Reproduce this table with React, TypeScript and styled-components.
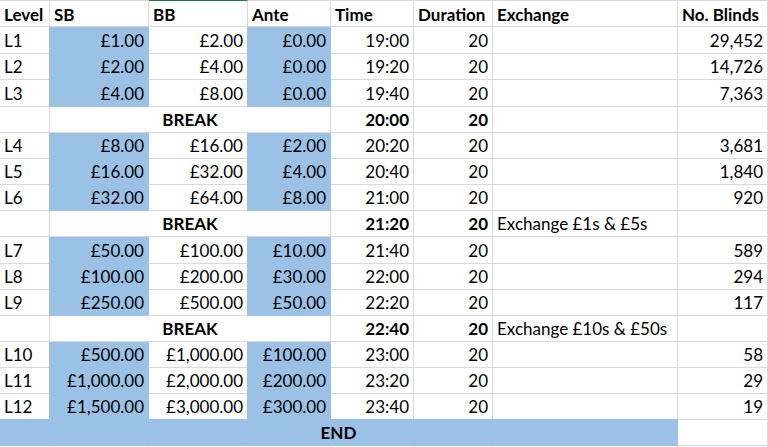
import React from "react";
import styled, { createGlobalStyle, css } from "styled-components";

const GRID = "#d9d9d9";
const BLUE = "#9bc2e6";
const GREEN = "#217346";

const Global = createGlobalStyle`
  html, body { margin: 0; padding: 0; background: #fff; overflow: hidden; }
  body { font-family: Lato, "Open Sans", sans-serif; color: #000; }
`;

const Sheet = styled.div`
  display: grid;
  grid-template-columns: 50px 99px 99px 83px 83px 79px 185px 90px;
  grid-template-rows: 27px 27px 26px 27px 26px 26px 26px 26px 26px 27px 26px 26px 26px 26px 26px 26px 26px 26px;
  width: 768px;
  height: 447px;
  overflow: hidden;
  font-size: 17px;
  line-height: 20px;
`;

const Cell = styled.div<{
  $align?: "left" | "right" | "center";
  $fill?: boolean;
  $bold?: boolean;
  $span?: string;
  $coverTop?: boolean;
}>`
  box-sizing: border-box;
  display: flex;
  align-items: flex-end;
  justify-content: ${(p) =>
    p.$align === "right" ? "flex-end" : p.$align === "center" ? "center" : "flex-start"};
  padding: 0 4px 2px 4px;
  border-right: 1px solid ${GRID};
  border-bottom: 1px solid ${GRID};
  font-weight: ${(p) => (p.$bold ? 700 : 400)};
  white-space: nowrap;
  overflow: visible;
  ${(p) => p.$span && css`grid-column: ${p.$span};`}
  ${(p) =>
    p.$fill &&
    css`
      background: ${BLUE};
      border-right-color: ${BLUE};
      border-bottom-color: ${BLUE};
      box-shadow: -1px 0 0 ${BLUE}${p.$coverTop ? `, -1px -1px 0 ${BLUE}, 0 -1px 0 ${BLUE}` : ""};
    `}
`;

const HeaderCell = styled(Cell)<{ $selected?: boolean }>`
  border-top: 1px solid ${(p) => (p.$selected ? GREEN : GRID)};
  font-weight: 700;
  padding-bottom: 1px;
`;

type Level = {
  kind: "level";
  name: string;
  sb: string;
  bb: string;
  ante: string;
  time: string;
  blinds: string;
};
type Break = { kind: "break"; time: string; exchange: string };
type Row = Level | Break;

const rows: Row[] = [
  { kind: "level", name: "L1", sb: "£1.00", bb: "£2.00", ante: "£0.00", time: "19:00", blinds: "29,452" },
  { kind: "level", name: "L2", sb: "£2.00", bb: "£4.00", ante: "£0.00", time: "19:20", blinds: "14,726" },
  { kind: "level", name: "L3", sb: "£4.00", bb: "£8.00", ante: "£0.00", time: "19:40", blinds: "7,363" },
  { kind: "break", time: "20:00", exchange: "" },
  { kind: "level", name: "L4", sb: "£8.00", bb: "£16.00", ante: "£2.00", time: "20:20", blinds: "3,681" },
  { kind: "level", name: "L5", sb: "£16.00", bb: "£32.00", ante: "£4.00", time: "20:40", blinds: "1,840" },
  { kind: "level", name: "L6", sb: "£32.00", bb: "£64.00", ante: "£8.00", time: "21:00", blinds: "920" },
  { kind: "break", time: "21:20", exchange: "Exchange £1s & £5s" },
  { kind: "level", name: "L7", sb: "£50.00", bb: "£100.00", ante: "£10.00", time: "21:40", blinds: "589" },
  { kind: "level", name: "L8", sb: "£100.00", bb: "£200.00", ante: "£30.00", time: "22:00", blinds: "294" },
  { kind: "level", name: "L9", sb: "£250.00", bb: "£500.00", ante: "£50.00", time: "22:20", blinds: "117" },
  { kind: "break", time: "22:40", exchange: "Exchange £10s & £50s" },
  { kind: "level", name: "L10", sb: "£500.00", bb: "£1,000.00", ante: "£100.00", time: "23:00", blinds: "58" },
  { kind: "level", name: "L11", sb: "£1,000.00", bb: "£2,000.00", ante: "£200.00", time: "23:20", blinds: "29" },
  { kind: "level", name: "L12", sb: "£1,500.00", bb: "£3,000.00", ante: "£300.00", time: "23:40", blinds: "19" },
];

const headers = ["Level", "SB", "BB", "Ante", "Time", "Duration", "Exchange", "No. Blinds"];

export default function App() {
  return (
    <>
      <Global />
      <Sheet>
        {headers.map((h) => (
          <HeaderCell key={h} $selected={h === "BB"}>
            {h}
          </HeaderCell>
        ))}
        {rows.map((r, i) =>
          r.kind === "level" ? (
            <React.Fragment key={i}>
              <Cell>{r.name}</Cell>
              <Cell $align="right" $fill>{r.sb}</Cell>
              <Cell $align="right">{r.bb}</Cell>
              <Cell $align="right" $fill>{r.ante}</Cell>
              <Cell $align="right">{r.time}</Cell>
              <Cell $align="right">20</Cell>
              <Cell />
              <Cell $align="right">{r.blinds}</Cell>
            </React.Fragment>
          ) : (
            <React.Fragment key={i}>
              <Cell />
              <Cell $span="2 / 5" $align="center" $bold>BREAK</Cell>
              <Cell $align="right" $bold>{r.time}</Cell>
              <Cell $align="right" $bold>20</Cell>
              <Cell>{r.exchange}</Cell>
              <Cell />
            </React.Fragment>
          )
        )}
        <Cell $span="1 / 8" $align="center" $bold $fill $coverTop>END</Cell>
        <Cell />
        {headers.map((h) => (
          <Cell key={"x" + h} />
        ))}
      </Sheet>
    </>
  );
}
